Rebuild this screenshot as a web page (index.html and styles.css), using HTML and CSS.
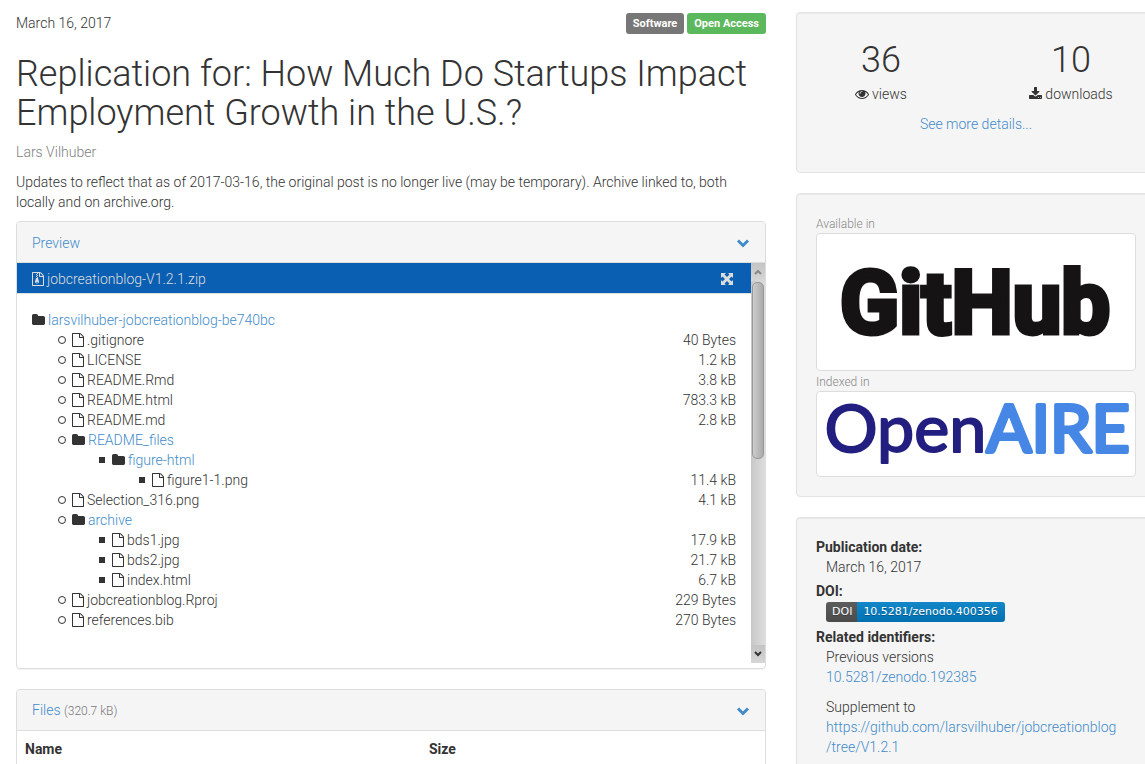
FILE: index.html
```html
<!DOCTYPE html>
<html lang="en">
<head>
<meta charset="utf-8">
<title>Replication for: How Much Do Startups Impact Employment Growth in the U.S.?</title>
<link rel="stylesheet" href="styles.css">
</head>
<body>
<svg class="sprite" aria-hidden="true">
  <symbol id="file" viewBox="0 0 1536 1792"><path d="M1468 380q28 28 48 76t20 88v1152q0 40-28 68t-68 28H96q-40 0-68-28t-28-68V96q0-40 28-68T96 0h896q40 0 88 20t76 48zm-444-244v376h376q-10-29-22-41l-313-313q-12-12-41-22zm384 1528V640H992q-40 0-68-28t-28-68V128H128v1536h1280z"/></symbol>
  <symbol id="zip" viewBox="0 0 1536 1792"><path d="M1468 380q28 28 48 76t20 88v1152q0 40-28 68t-68 28H96q-40 0-68-28t-28-68V96q0-40 28-68T96 0h896q40 0 88 20t76 48zm-444-244v376h376q-10-29-22-41l-313-313q-12-12-41-22zm384 1528V640H992q-40 0-68-28t-28-68V128H768v128H640V128H128v1536h1280z"/><path d="M512 256h128v128H512zM640 384h128v128H640zM512 512h128v128H512zM640 640h128v128H640zM512 768h256l110 390q18 50 18 122 0 82-74 137t-182 55-182-55-74-137q0-72 18-122zm128 640q53 0 90-19t37-45-37-45-90-19-90 19-37 45 37 45 90 19z"/></symbol>
  <symbol id="folder" viewBox="0 0 1664 1792"><path d="M1664 608v704q0 92-66 158t-158 66H224q-92 0-158-66T0 1312V352q0-92 66-158t158-66h320q92 0 158 66t66 158v32h672q92 0 158 66t66 158z"/></symbol>
  <symbol id="eye" viewBox="0 0 1792 1792"><path d="M1664 960q-152-236-381-353 61 104 61 225 0 185-131.500 316.500t-316.500 131.500-316.500-131.500-131.500-316.500q0-121 61-225-229 117-381 353 133 205 333.500 326.500t434.500 121.500 434.500-121.500 333.500-326.500zm-720-384q0-20-14-34t-34-14q-125 0-214.500 89.500t-89.500 214.500q0 20 14 34t34 14 34-14 14-34q0-86 61-147t147-61q20 0 34-14t14-34zm848 384q0 34-20 69-140 230-376.500 368.500t-499.500 138.500-499.500-139-376.500-368q-20-35-20-69t20-69q140-229 376.500-368t499.500-139 499.500 139 376.500 368q20 35 20 69z"/></symbol>
  <symbol id="download" viewBox="64 0 1664 1792"><path d="M1344 1344q0-26-19-45t-45-19-45 19-19 45 19 45 45 19 45-19 19-45zm256 0q0-26-19-45t-45-19-45 19-19 45 19 45 45 19 45-19 19-45zm128-224v320q0 40-28 68t-68 28h-1472q-40 0-68-28t-28-68v-320q0-40 28-68t68-28h465l135 136q58 56 136 56t136-56l136-136h464q40 0 68 28t28 68zm-325-569q17 41-14 70l-448 448q-18 19-45 19t-45-19l-448-448q-31-29-14-70 17-39 59-39h256v-448q0-26 19-45t45-19h256q26 0 45 19t19 45v448h256q42 0 59 39z"/></symbol>
  <symbol id="chevron" viewBox="0 0 14 14"><path d="M2 4.500l5 5 5-5" fill="none" stroke="currentColor" stroke-width="3"/></symbol>
  <symbol id="expand" viewBox="0 0 12 12"><path d="M0 0h5L3.500 1.500 6 4l2.500-2.500L7 0h5v5l-1.500-1.500L8 6l2.500 2.500L12 7v5H7l1.500-1.500L6 8l-2.500 2.500L5 12H0V7l1.500 1.500L4 6 1.500 3.500 0 5z"/></symbol>
</svg>

<div class="page">
  <main>
    <div class="meta">
      <time datetime="2017-03-16">March 16, 2017</time>
      <div class="labels"><span class="label">Software</span><span class="label open">Open Access</span></div>
    </div>
    <h1>Replication for: How Much Do Startups Impact Employment Growth in the U.S.?</h1>
    <p class="author">Lars Vilhuber</p>
    <p class="description">Updates to reflect that as of 2017-03-16, the original post is no longer live (may be temporary). Archive linked to, both locally and on archive.org.</p>

    <section class="panel">
      <header class="panel-head">
        <a href="#preview">Preview</a>
        <a href="#preview" aria-label="Toggle preview"><svg class="icon chevron"><use href="#chevron"/></svg></a>
      </header>
      <div class="preview" id="preview">
        <div class="preview-main">
          <div class="zip-bar">
            <span class="entry"><svg class="icon doc"><use href="#zip"/></svg>jobcreationblog-V1.2.1.zip</span>
            <button class="expand" type="button" aria-label="Fullscreen"><svg class="icon full"><use href="#expand"/></svg></button>
          </div>
          <div class="tree">
            <div class="entry"><svg class="icon fold"><use href="#folder"/></svg><a href="#root">larsvilhuber-jobcreationblog-be740bc</a></div>
            <ul class="level" id="root">
              <li><div class="row"><span class="entry"><svg class="icon doc"><use href="#file"/></svg>.gitignore</span><span>40 Bytes</span></div></li>
              <li><div class="row"><span class="entry"><svg class="icon doc"><use href="#file"/></svg>LICENSE</span><span>1.2 kB</span></div></li>
              <li><div class="row"><span class="entry"><svg class="icon doc"><use href="#file"/></svg>README.Rmd</span><span>3.8 kB</span></div></li>
              <li><div class="row"><span class="entry"><svg class="icon doc"><use href="#file"/></svg>README.html</span><span>783.3 kB</span></div></li>
              <li><div class="row"><span class="entry"><svg class="icon doc"><use href="#file"/></svg>README.md</span><span>2.8 kB</span></div></li>
              <li><div class="entry"><svg class="icon fold"><use href="#folder"/></svg><a href="#readme-files">README_files</a></div>
                <ul class="level square" id="readme-files">
                  <li><div class="entry"><svg class="icon fold"><use href="#folder"/></svg><a href="#figure-html">figure-html</a></div>
                    <ul class="level square" id="figure-html">
                      <li><div class="row"><span class="entry"><svg class="icon doc"><use href="#file"/></svg>figure1-1.png</span><span>11.4 kB</span></div></li>
                    </ul>
                  </li>
                </ul>
              </li>
              <li><div class="row"><span class="entry"><svg class="icon doc"><use href="#file"/></svg>Selection_316.png</span><span>4.1 kB</span></div></li>
              <li><div class="entry"><svg class="icon fold"><use href="#folder"/></svg><a href="#archive">archive</a></div>
                <ul class="level square" id="archive">
                  <li><div class="row"><span class="entry"><svg class="icon doc"><use href="#file"/></svg>bds1.jpg</span><span>17.9 kB</span></div></li>
                  <li><div class="row"><span class="entry"><svg class="icon doc"><use href="#file"/></svg>bds2.jpg</span><span>21.7 kB</span></div></li>
                  <li><div class="row"><span class="entry"><svg class="icon doc"><use href="#file"/></svg>index.html</span><span>6.7 kB</span></div></li>
                </ul>
              </li>
              <li><div class="row"><span class="entry"><svg class="icon doc"><use href="#file"/></svg>jobcreationblog.Rproj</span><span>229 Bytes</span></div></li>
              <li><div class="row"><span class="entry"><svg class="icon doc"><use href="#file"/></svg>references.bib</span><span>270 Bytes</span></div></li>
            </ul>
          </div>
        </div>
        <div class="scrollbar">
          <button class="scroll-btn" type="button" aria-label="Scroll up"><svg class="arrow dim" viewBox="0 0 8 8"><path d="M1 6l3-3 3 3"/></svg></button>
          <div class="track"><div class="thumb"></div></div>
          <button class="scroll-btn" type="button" aria-label="Scroll down"><svg class="arrow" viewBox="0 0 8 8"><path d="M1 2l3 3 3-3"/></svg></button>
        </div>
      </div>
    </section>

    <section class="panel">
      <header class="panel-head compact">
        <span><a href="#files">Files</a> <small>(320.7 kB)</small></span>
        <a href="#files" aria-label="Toggle files"><svg class="icon chevron"><use href="#chevron"/></svg></a>
      </header>
      <table class="files" id="files">
        <thead><tr><th class="name" scope="col">Name</th><th scope="col">Size</th></tr></thead>
      </table>
    </section>
  </main>

  <aside>
    <section class="well stats">
      <div class="counts">
        <div><div class="number">36</div><div class="caption"><svg class="icon eye"><use href="#eye"/></svg>views</div></div>
        <div><div class="number">10</div><div class="caption"><svg class="icon fold"><use href="#download"/></svg>downloads</div></div>
      </div>
      <a class="more" href="#details">See more details...</a>
    </section>

    <section class="well">
      <p class="tag">Available in</p>
      <a class="logo github" href="#github" aria-label="GitHub"><svg viewBox="0 0 320 138"><text class="gh" x="159" y="100" text-anchor="middle">GitHub</text></svg></a>
      <p class="tag">Indexed in</p>
      <a class="logo openaire" href="#openaire" aria-label="OpenAIRE"><svg viewBox="0 0 320 86"><text class="oa" x="5" y="61"><tspan class="oa-open">Open</tspan><tspan class="oa-aire">AIRE</tspan></text></svg></a>
    </section>

    <section class="well">
      <dl class="details">
        <dt>Publication date:</dt>
        <dd>March 16, 2017</dd>
        <dt>DOI:</dt>
        <dd><a class="badge" href="#doi"><span class="badge-key">DOI</span><span class="badge-value">10.5281/zenodo.400356</span></a></dd>
        <dt>Related identifiers:</dt>
        <dd>Previous versions<br><a href="#previous">10.5281/zenodo.192385</a></dd>
        <dd class="next">Supplement to<br><a href="#supplement">https://github.com/larsvilhuber/jobcreationblog<wbr>/tree/V1.2.1</a></dd>
      </dl>
    </section>
  </aside>
</div>
</body>
</html>
```
FILE: styles.css
```css
*, *::before { box-sizing: border-box; }

body {
  margin: 0;
  height: 100vh;
  overflow: hidden;
  background: #fff;
  color: #333;
  font: 300 14px/20px Roboto, "Liberation Sans", sans-serif;
}

h1, p, ul, dl, dd { margin: 0; padding: 0; }
a { color: #428bca; text-decoration: none; }
button { border: 0; padding: 0; background: none; color: inherit; }

.sprite { display: none; }
.icon { display: block; flex: none; height: 14px; fill: currentColor; }
.doc { width: 12px; }
.fold { width: 13px; }
.eye, .chevron { width: 14px; }
.full { width: 12px; height: 12px; }

.page {
  display: grid;
  grid-template-columns: 25fr 12fr;
  gap: 30px;
  margin-right: -11px;
  padding: 12px 0 0 16px;
}

.meta { display: flex; justify-content: space-between; padding-top: 1px; }
.labels { display: flex; gap: 3px; }
.label {
  padding: 0 7px;
  border-radius: 3px;
  background: #777;
  color: #fff;
  font-size: 11px;
  font-weight: 700;
  line-height: 21px;
}
.label.open { background: #5cb85c; }

h1 { margin: 21px 0 9px; font-size: 36px; font-weight: 300; line-height: 39px; }
.author { margin-bottom: 10px; color: #808080; }
.description { margin-bottom: 9px; }

.panel {
  margin-bottom: 20px;
  border: 1px solid #ddd;
  border-radius: 4px;
  box-shadow: 0 1px 1px rgba(0, 0, 0, .05);
}
.panel-head {
  display: flex;
  align-items: center;
  justify-content: space-between;
  padding: 11px 15px 9px;
  border-bottom: 1px solid #ddd;
  border-radius: 3px 3px 0 0;
  background: #f5f5f5;
}
.panel-head.compact { padding: 10px 15px 9px; }
.panel-head small { color: #777; font-size: 12px; }

.preview { display: flex; padding-bottom: 5px; }
.preview-main { flex: 1; }
.zip-bar {
  display: flex;
  align-items: center;
  justify-content: space-between;
  padding: 6px 18px 4px 15px;
  border-bottom: 1px solid #ddd;
  background: #0a5fb2;
  color: #ddd;
}
.entry { display: flex; align-items: center; gap: 3px; }
.tree { padding: 16px 15px 33px; }
.level { padding-left: 40px; list-style: none; }
.level > li { position: relative; }
.level > li::before {
  content: "";
  position: absolute;
  top: 6px;
  left: -14px;
  width: 8px;
  height: 8px;
  border: 1px solid #333;
  border-radius: 50%;
}
.square > li::before { top: 7px; left: -13px; width: 6px; height: 6px; border-radius: 0; background: #333; }
.row { display: flex; justify-content: space-between; }

.scrollbar { display: flex; flex-direction: column; width: 14px; background: linear-gradient(90deg, #c8c8c8, #ddd); }
.scroll-btn { display: flex; align-items: center; justify-content: center; height: 18px; background: linear-gradient(#c4c4c4, #d6d6d6); color: #333; }
.arrow { width: 8px; height: 8px; fill: none; stroke: #333; stroke-width: 2; }
.arrow.dim { stroke: #888; }
.track { flex: 1; padding: 1px; }
.thumb { height: 49%; border: 1px solid #999; border-radius: 5px; background: linear-gradient(90deg, #ccc, #aaa); }

.files { width: 100%; border-collapse: collapse; }
.files th { padding: 8px; text-align: left; font-weight: 700; }
.files .name { width: 54%; }

.well {
  margin-bottom: 20px;
  padding: 19px;
  border: 1px solid #e3e3e3;
  border-radius: 4px;
  background: #f5f5f5;
  box-shadow: inset 0 1px 1px rgba(0, 0, 0, .05);
}
.stats { padding: 27px 19px 38px; text-align: center; }
.counts { display: grid; grid-template-columns: 1fr 1fr; gap: 60px; }
.number { margin-bottom: 4px; font-size: 36px; line-height: 40px; }
.caption { display: flex; align-items: center; justify-content: center; gap: 3px; }
.more { display: block; margin-top: 10px; }

.tag { margin-bottom: -2px; color: #888; font-size: 12px; line-height: 22px; }
.logo { display: block; border: 1px solid #ddd; border-radius: 4px; background: #fff; }
.logo svg { display: block; width: 100%; height: 100%; overflow: visible; }
.github { height: 138px; }
.openaire { height: 86px; }
.gh { fill: #161314; stroke: #161314; stroke-width: 5; font: 700 88px Roboto, sans-serif; }
.oa { font: 400 68px Lato, sans-serif; stroke-linejoin: round; }
.oa-open { fill: #221f80; stroke: #221f80; stroke-width: 2; }
.oa-aire { fill: #4687e6; stroke: #4687e6; stroke-width: 4; }

.details dt { font-weight: 700; }
.details dd { margin: 0 0 4px 10px; }
.details .next { margin-top: 10px; }
.badge {
  display: flex;
  width: max-content;
  margin: 1px 0 5px;
  overflow: hidden;
  border-radius: 3px;
  color: #fff;
  font: 400 11px/20px "DejaVu Sans", sans-serif;
  text-shadow: 0 1px rgba(1, 1, 1, .3);
}
.badge-key { padding: 0 5px 0 6px; background: linear-gradient(#5c5c5c, #4b4b4b); }
.badge-value { padding: 0 7px 0 6px; background: linear-gradient(#1387c9, #0070b0); }
```
